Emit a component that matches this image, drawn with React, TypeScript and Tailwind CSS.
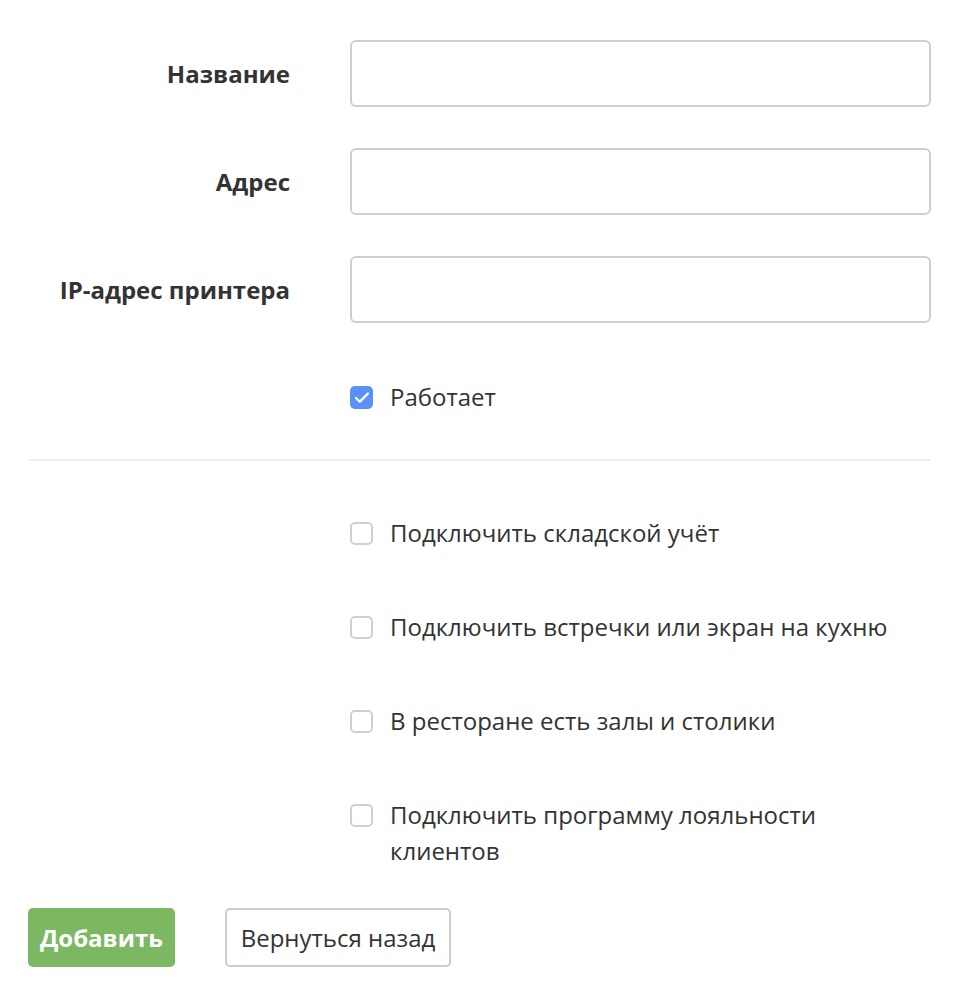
import { Check } from "lucide-react";

const font = { fontFamily: '"Open Sans", "Noto Sans", sans-serif' };

function Field({ label }: { label: string }) {
  return (
    <div className="flex items-center">
      <label className="w-[262px] shrink-0 text-right text-[24px] font-bold text-[#333]">{label}</label>
      <input
        type="text"
        className="ml-[60px] h-[67px] flex-1 rounded-[6px] border-2 border-[#cfcfcf] bg-white px-3 text-[24px] outline-none"
      />
    </div>
  );
}

function Box({ checked }: { checked?: boolean }) {
  return checked ? (
    <span className="flex h-[23px] w-[23px] items-center justify-center rounded-[5px] bg-[#5b8ff9]">
      <Check className="h-[18px] w-[18px] text-white" strokeWidth={3.2} />
    </span>
  ) : (
    <span className="block h-[23px] w-[23px] rounded-[5px] border-2 border-[#d0d0d0] bg-white" />
  );
}

function CheckRow({ label, checked }: { label: string; checked?: boolean }) {
  return (
    <div className="flex items-start pl-[322px]">
      <div className="mt-[7px] shrink-0">
        <Box checked={checked} />
      </div>
      <span className="ml-[17px] whitespace-pre-line text-[24px] leading-[36px] text-[#333]">{label}</span>
    </div>
  );
}

export default function App() {
  return (
    <div className="min-h-screen bg-white" style={font}>
      <div className="w-[931px] pl-[28px] pt-[40px]">
        <div className="flex flex-col gap-[41px]">
          <Field label="Название" />
          <Field label="Адрес" />
          <Field label="IP-адрес принтера" />
        </div>
        <div className="mt-[56px]">
          <CheckRow label="Работает" checked />
        </div>
        <div className="mt-[44px] h-[2px] bg-[#eeeeee]" />
        <div className="mt-[54px] flex flex-col gap-[58px]">
          <CheckRow label="Подключить складской учёт" />
          <CheckRow label="Подключить встречки или экран на кухню" />
          <CheckRow label="В ресторане есть залы и столики" />
          <CheckRow label={"Подключить программу лояльности\nклиентов"} />
        </div>
        <div className="mt-[39px] flex gap-[50px]">
          <button className="h-[59px] w-[147px] rounded-[5px] bg-[#7cb862] text-[24px] font-bold text-white">
            Добавить
          </button>
          <button className="h-[59px] w-[226px] rounded-[5px] border-2 border-[#cccccc] bg-white text-[24px] text-[#333]">
            Вернуться назад
          </button>
        </div>
      </div>
    </div>
  );
}
